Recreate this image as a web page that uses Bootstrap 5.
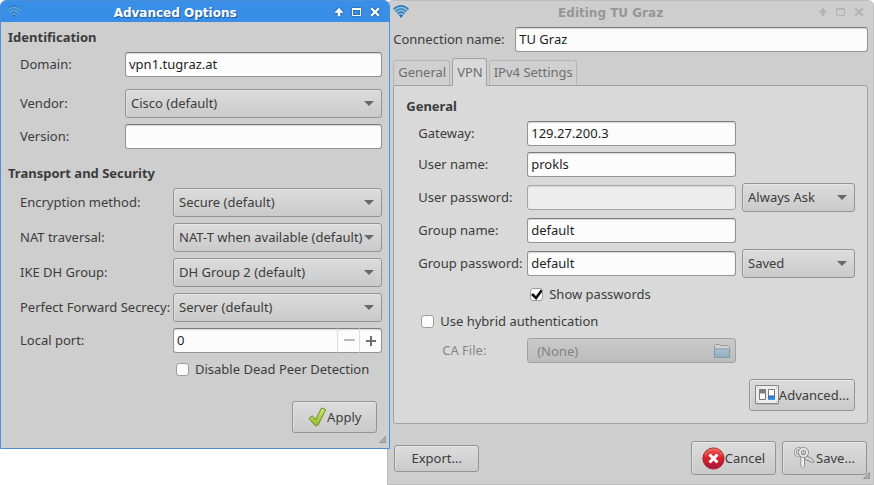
<!DOCTYPE html>
<html lang="en">
<head>
<meta charset="utf-8">
<meta name="viewport" content="width=device-width, initial-scale=1">
<title>Editing TU Graz</title>
<link href="https://cdn.jsdelivr.net/npm/bootstrap@5.3.0/dist/css/bootstrap.min.css" rel="stylesheet">
<style>
:root { --ink:#3c3c3c; --win:#cecece; --edge:#949494; --arrow:url("data:image/svg+xml,%3Csvg xmlns='http://www.w3.org/2000/svg' viewBox='0 0 10 5'%3E%3Cpath d='M0 0h10L5 5z' fill='%23686868'/%3E%3C/svg%3E"); }
body { font-family:"Noto Sans",sans-serif; font-size:13px; line-height:18px; color:var(--ink); background:#fff; }
.window { background:var(--win); border:1px solid #bdbdbd; border-radius:6px 6px 0 0; position:relative; min-width:0; }
.win-options { flex:390 1 0; border-color:#4a90d9; z-index:2; }
.win-editor { flex:487 1 0; margin-left:-3px; }
.titlebar { height:21px; padding:0 9px 0 5px; color:#969696; border-radius:5px 5px 0 0; }
.win-options .titlebar { background:#398ee7; color:#fff; }
.win-options .caption-text { text-shadow:1px 1px 1px #1f5694; }
.win-options .win-btn { filter:drop-shadow(0 0 1px #14457f); }
.caption-text { font-family:"DejaVu Sans",sans-serif; font-weight:700; font-size:12px; padding:2px 6px 0 0; }
.win-btn { border:0; padding:0; width:10px; height:10px; background:none; color:inherit; display:flex; }
.win-editor .win-btn { color:#b4b4b4; }
.win-btns { gap:8px; }
h2.section { font-size:13px; line-height:18px; font-weight:700; margin:0 0 6px; }
.options-body { padding:6px 7px 15px; }
.editor-body { padding:5px 5px 9px; }
label { white-space:nowrap; padding-bottom:2px; }
.fields { display:grid; row-gap:6px; align-items:center; margin-left:12px; }
.fields-id { grid-template-columns:105px 1fr; margin-bottom:15px; }
.fields-id .domain { margin-bottom:6px; }
.fields-sec { grid-template-columns:153px 1fr; }
.fields-vpn { grid-template-columns:103px 1fr 113px; column-gap:6px; }
.fields-hybrid { margin-top:6px; }
.span-all { grid-column:1/-1; }
.form-control, .form-select, .btn { font-size:13px; line-height:18px; color:var(--ink); border:1px solid var(--edge); border-radius:3px; }
.form-control { height:25px; padding:0 3px 2px; color:#1e1e1e; background:#fcfcfc; border-top-color:#7c7c7c; box-shadow:inset 0 1px 1px #d4d4d4; }
.form-control:disabled { background:#ededed; border-color:#a5a5a5; }
.form-select { height:29px; padding:0 17px 2px 5px; background:var(--arrow) right 7px center/10px 5px no-repeat, linear-gradient(#dcdcdc,#cacaca); box-shadow:inset 0 1px #e6e6e6, inset 1px 0 #dedede; }
.btn { padding:0; min-width:85px; background:linear-gradient(#dcdcdc,#cacaca); box-shadow:inset 0 1px #e8e8e8, inset 1px 0 #e0e0e0; }
.apply-row { margin:21px 5px 0 0; }
.btn-tall { height:32px; }
.btn-adv { width:106px; }
.btn-foot { height:34px; }
.btn-export { height:27px; }
.foot { gap:6px; padding:0 1px; }
.form-check-input { width:13px; height:13px; margin:0; border:1px solid #9b9b9b; border-radius:2px; background-color:#fcfcfc; }
.form-check-input:checked { background-color:#fcfcfc; border-color:#9b9b9b; background-size:13px 13px; background-image:url("data:image/svg+xml,%3Csvg xmlns='http://www.w3.org/2000/svg' viewBox='0 0 13 13'%3E%3Cpath d='M2 6l4 4 6-8' fill='none' stroke='%23111' stroke-width='2.6'/%3E%3C/svg%3E"); }
.tick { display:flex; align-items:center; gap:6px; height:21px; padding-left:3px; }
.spin .btn { min-width:0; width:23px; height:25px; display:flex; align-items:center; justify-content:center; background:#fcfcfc; border-top-color:#7c7c7c; border-left-color:#dedede; color:#6e6e6e; box-shadow:inset 0 1px 1px #d4d4d4; }
.spin .btn:first-of-type { border-right:0; color:#bababa; }
.spin .form-control { border-right:0; }
.grip { position:absolute; right:3px; bottom:5px; width:7px; height:7px; }
.conn-label { width:122px; }
.nav-tabs { border:0; gap:2px; margin-top:6px; align-items:flex-end; }
.nav-tabs .nav-link { padding:0 3px 2px 4px; height:25px; margin:0; color:#6e6e6e; border:1px solid #b5b5b5; border-bottom:0; border-radius:3px 3px 0 0; line-height:18px; background:#d0d0d0; }
.nav-tabs .nav-link.active { height:28px; margin-bottom:-1px; background:#d9d9d9; border-color:#a2a2a2; color:#6e6e6e; position:relative; z-index:1; }
.pane { background:#d9d9d9; border:1px solid #a2a2a2; border-radius:0 3px 3px 3px; padding:11px 12px 12px; margin-bottom:17px; }
.file-btn { height:25px; padding:0 5px 0 9px; background:linear-gradient(#c9c9c9,#bdbdbd); box-shadow:none; }
.file-btn:disabled { opacity:1; color:#828282; border-color:#a2a2a2; }
.fade-label { color:#858585; padding-left:24px; }
svg { display:block; flex:none; }
</style>
<script src="https://cdn.jsdelivr.net/npm/bootstrap@5.3.0/dist/js/bootstrap.bundle.min.js"></script>
</head>
<body>
<svg width="0" height="0" class="position-absolute" aria-hidden="true">
  <defs>
    <linearGradient id="gGreen" x2="0" y2="1"><stop stop-color="#d6e86c"/><stop offset="1" stop-color="#93b92f"/></linearGradient>
    <linearGradient id="gRed" x2="0" y2="1"><stop stop-color="#ee5a50"/><stop offset=".5" stop-color="#d4232f"/><stop offset="1" stop-color="#a8113a"/></linearGradient>
    <linearGradient id="gBlue" x2="0" y2="1"><stop stop-color="#1f67b4"/><stop offset="1" stop-color="#4a9fe8"/></linearGradient>
    <linearGradient id="gFolder" x2="0" y2="1"><stop stop-color="#afc3d1"/><stop offset="1" stop-color="#8eaabd"/></linearGradient>
    <symbol id="wifi" viewBox="0 0 16 13"><path d="M0 4Q8-3.500 16 4L8 13z" fill="#79b4dc" opacity=".75"/><g fill="none" stroke="#2a7ab5" stroke-width="1.300"><path d="M.6 4.300Q8-2.800 15.400 4.300"/><path d="M2.700 6.500Q8 1.200 13.300 6.500"/><path d="M4.700 8.700Q8 5.300 11.300 8.700"/></g><path d="M6 10.300Q8 8.500 10 10.300L8 12.800z" fill="#1f6dab"/></symbol>
    <symbol id="up" viewBox="0 0 10 10"><path d="M5 1L1 5.500h3V9h2V5.500h3z" fill="currentColor" stroke="currentColor" stroke-width=".6"/></symbol>
    <symbol id="max" viewBox="0 0 10 10"><path d="M.5 1.500h8v7h-8z" fill="none" stroke="currentColor"/><path d="M0 1h9v2H0z" fill="currentColor"/></symbol>
    <symbol id="close" viewBox="0 0 10 10"><path d="M1.200 1.200l7.600 7.600M8.800 1.200L1.200 8.800" stroke="currentColor" stroke-width="2.200"/></symbol>
    <symbol id="grip" viewBox="0 0 7 7"><path d="M6.500.5v6h-6z" fill="#b0b0b0" stroke="#8a8a8a" stroke-width=".8"/></symbol>
  </defs>
</svg>
<main class="d-flex align-items-start">

  <section class="window win-options" aria-label="Advanced Options">
    <header class="titlebar d-flex align-items-center">
      <svg width="16" height="13" opacity=".7"><use href="#wifi"/></svg>
      <div class="caption-text flex-fill text-center">Advanced Options</div>
      <div class="win-btns d-flex">
        <button class="win-btn" aria-label="Shade"><svg width="10" height="10"><use href="#up"/></svg></button>
        <button class="win-btn" aria-label="Maximize"><svg width="10" height="10"><use href="#max"/></svg></button>
        <button class="win-btn" aria-label="Close"><svg width="10" height="10"><use href="#close"/></svg></button>
      </div>
    </header>
    <form class="options-body">
      <h2 class="section">Identification</h2>
      <div class="fields fields-id">
        <label class="domain" for="domain">Domain:</label>
        <input class="form-control domain" id="domain" value="vpn1.tugraz.at">
        <label for="vendor">Vendor:</label>
        <select class="form-select" id="vendor"><option>Cisco (default)</option></select>
        <label for="version">Version:</label>
        <input class="form-control" id="version">
      </div>
      <h2 class="section">Transport and Security</h2>
      <div class="fields fields-sec">
        <label for="enc">Encryption method:</label>
        <select class="form-select" id="enc"><option>Secure (default)</option></select>
        <label for="nat">NAT traversal:</label>
        <select class="form-select" id="nat"><option>NAT-T when available (default)</option></select>
        <label for="ike">IKE DH Group:</label>
        <select class="form-select" id="ike"><option>DH Group 2 (default)</option></select>
        <label for="pfs">Perfect Forward Secrecy:</label>
        <select class="form-select" id="pfs"><option>Server (default)</option></select>
        <label for="port">Local port:</label>
        <div class="input-group flex-nowrap spin">
          <input class="form-control" id="port" value="0" inputmode="numeric">
          <button type="button" class="btn" aria-label="Decrease"><svg width="11" height="11"><path d="M0 5h11" stroke="currentColor" stroke-width="2"/></svg></button>
          <button type="button" class="btn" aria-label="Increase"><svg width="10" height="10"><path d="M0 5h10M5 0v10" stroke="currentColor" stroke-width="2"/></svg></button>
        </div>
        <span></span>
        <div class="tick"><input class="form-check-input" type="checkbox" id="dpd"><label for="dpd">Disable Dead Peer Detection</label></div>
      </div>
      <div class="apply-row d-flex justify-content-end">
        <button type="button" class="btn btn-tall d-flex align-items-center justify-content-center">
          <svg width="19" height="20" viewBox="0 0 19 20"><path d="M1 11.500l3.300-2.700 3.200 4L13.500 1l4.200 1.600-7.500 15.200-2.600 1.200z" fill="url(#gGreen)" stroke="#5f8f2e" stroke-linejoin="round"/></svg>Apply
        </button>
      </div>
    </form>
    <svg class="grip"><use href="#grip"/></svg>
  </section>

  <section class="window win-editor" aria-label="Editing TU Graz">
    <header class="titlebar d-flex align-items-center">
      <svg width="16" height="13"><use href="#wifi"/></svg>
      <div class="caption-text flex-fill text-center">Editing TU Graz</div>
      <div class="win-btns d-flex">
        <button class="win-btn" aria-label="Shade"><svg width="10" height="10"><use href="#up"/></svg></button>
        <button class="win-btn" aria-label="Maximize"><svg width="10" height="10"><use href="#max"/></svg></button>
        <button class="win-btn" aria-label="Close"><svg width="10" height="10"><use href="#close"/></svg></button>
      </div>
    </header>
    <form class="editor-body">
      <div class="d-flex align-items-center">
        <label class="conn-label flex-shrink-0" for="conn">Connection name:</label>
        <input class="form-control" id="conn" value="TU Graz">
      </div>
      <div class="nav nav-tabs" role="tablist">
        <button type="button" class="nav-link" role="tab">General</button>
        <button type="button" class="nav-link active" role="tab" aria-selected="true">VPN</button>
        <button type="button" class="nav-link" role="tab">IPv4 Settings</button>
      </div>
      <div class="pane" role="tabpanel">
        <h2 class="section">General</h2>
        <div class="fields fields-vpn">
          <label for="gw">Gateway:</label>
          <input class="form-control" id="gw" value="129.27.200.3"><span></span>
          <label for="user">User name:</label>
          <input class="form-control" id="user" value="prokls"><span></span>
          <label for="upw">User password:</label>
          <input class="form-control" id="upw" disabled>
          <select class="form-select" aria-label="User password storage"><option>Always Ask</option></select>
          <label for="group">Group name:</label>
          <input class="form-control" id="group" value="default"><span></span>
          <label for="gpw">Group password:</label>
          <input class="form-control" id="gpw" value="default">
          <select class="form-select" aria-label="Group password storage"><option>Saved</option></select>
          <span></span>
          <div class="tick"><input class="form-check-input" type="checkbox" id="show" checked><label for="show">Show passwords</label></div><span></span>
        </div>
        <div class="fields fields-vpn fields-hybrid">
          <div class="tick span-all"><input class="form-check-input" type="checkbox" id="hybrid"><label for="hybrid">Use hybrid authentication</label></div>
          <label class="fade-label" for="ca">CA File:</label>
          <button type="button" class="btn file-btn d-flex align-items-center justify-content-between" id="ca" disabled>(None)
            <svg width="16" height="14" viewBox="0 0 16 14"><path d="M.5 13V1.500L1.500.5h4l1 1h8l1 1V13z" fill="#d0d0d0" stroke="#9c9c9c"/><path d="M.5 5h15v8.500H.5z" fill="url(#gFolder)" stroke="#7f9bae"/></svg>
          </button>
        </div>
        <div class="d-flex justify-content-end mt-3">
          <button type="button" class="btn btn-tall btn-adv d-flex align-items-center justify-content-center">
            <svg width="24" height="20" viewBox="0 0 24 20"><path d="M.5.5h23v18H.5z" fill="#ededed" stroke="#858585"/><path d="M1 19.500h22" stroke="#b5b5b5"/><path d="M4.500 4.500h6v10h-6zM13.500 4.500h6v10h-6z" fill="#fff" stroke="#777"/><path d="M4 4h7v4.500H4z" fill="#7d7d7d"/><path d="M13 10.500h7V15h-7z" fill="url(#gBlue)"/><path d="M2 2.500h1M21 2.500h1M2 16.500h1M21 16.500h1" stroke="#aaa"/></svg>Advanced...
          </button>
        </div>
      </div>
      <div class="foot d-flex align-items-center">
        <button type="button" class="btn btn-export me-auto">Export...</button>
        <button type="button" class="btn btn-foot d-flex align-items-center justify-content-center">
          <svg width="23" height="23" viewBox="0 0 23 23"><circle cx="11.500" cy="11.500" r="10.600" fill="url(#gRed)" stroke="#a3262e"/><path d="M3 8a9 9 0 0 1 17 0" fill="none" stroke="#f59a92" opacity=".7"/><path d="M7.500 7.500l8 8M15.500 7.500l-8 8" stroke="#fff" stroke-width="3"/></svg>Cancel
        </button>
        <button type="button" class="btn btn-foot d-flex align-items-center justify-content-center">
          <svg width="22" height="22" viewBox="0 0 22 22"><path d="M10.500 7.500l8.500 5 1 2.500-1.500 1-1.500-1.500-1.500.5-1-1.800-1.500.3-4-3z" fill="#d5d5d5" stroke="#858585" stroke-width=".9"/><path d="M6 8.500h4.500v10.500l-2 1.800-2-1.800.8-1.500-1-1.500.9-1.500z" fill="#f2f2f2" stroke="#858585" stroke-width=".9"/><circle cx="4.800" cy="5.200" r="3.600" fill="none" stroke="#858585" stroke-width="2.600"/><circle cx="4.800" cy="5.200" r="3.600" fill="none" stroke="#ededed" stroke-width="1.200"/><circle cx="9.500" cy="5.500" r="3.600" fill="none" stroke="#858585" stroke-width="3.600"/><circle cx="9.500" cy="5.500" r="3.600" fill="none" stroke="#e6e6e6" stroke-width="2.100"/></svg>Save...
        </button>
      </div>
    </form>
    <svg class="grip"><use href="#grip"/></svg>
  </section>
</main>
</body>
</html>
